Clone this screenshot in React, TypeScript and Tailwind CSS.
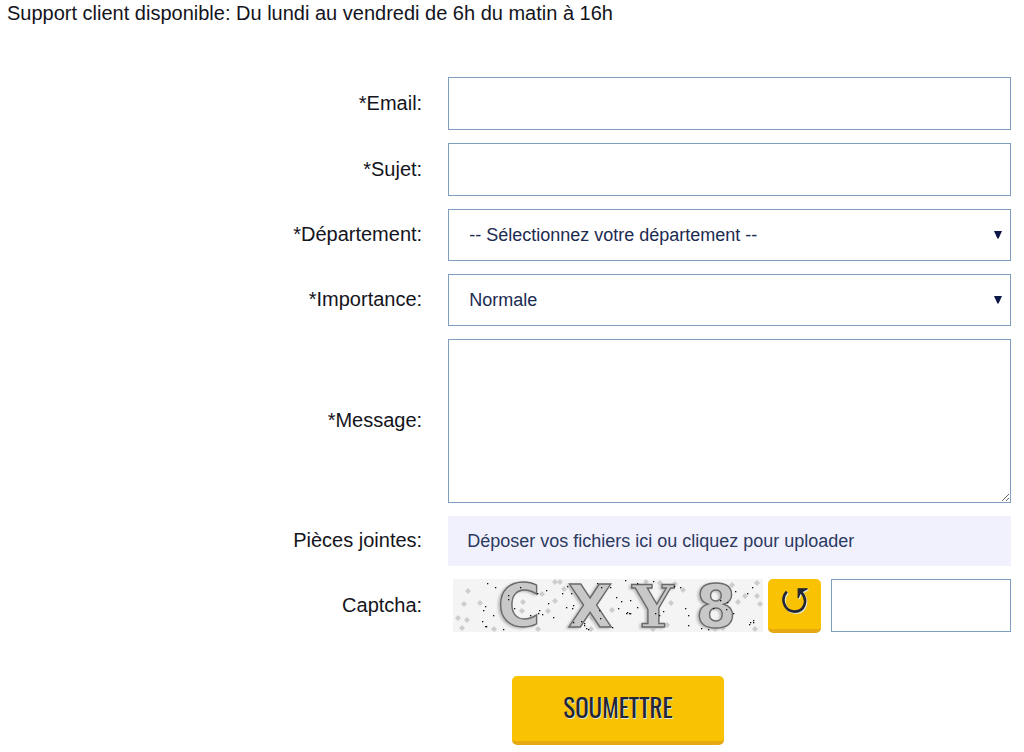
import type { ReactNode } from "react";

const DIAMONDS: [number, number][] = [
  [15, 12], [11, 25], [27, 24], [5, 39], [14, 41], [9, 49], [41, 50], [70, 23], [54, 27], [69, 32],
  [85, 50], [95, 32], [102, 22], [111, 10], [102, 3], [107, 3], [89, 15], [139, 39], [159, 31],
  [138, 50], [193, 3], [207, 4], [222, 5], [230, 11], [218, 24], [279, 6], [304, 4], [292, 17],
  [304, 17], [285, 23], [307, 25], [214, 46], [200, 50], [262, 50], [270, 49], [302, 50],
];

const DOTS: [number, number][] = [
  [34, 4], [42, 8], [55, 16], [61, 29], [55, 20], [32, 27], [30, 31], [29, 42], [32, 47], [33, 47],
  [40, 36], [50, 50], [77, 36], [85, 34], [89, 35], [95, 24], [86, 31], [84, 14], [93, 11], [67, 8],
  [114, 7], [109, 14], [113, 28], [100, 38], [118, 14], [120, 26], [119, 29], [128, 42], [131, 44],
  [131, 46], [133, 49], [135, 50], [120, 43], [144, 4], [146, 31], [147, 39], [148, 8], [157, 8],
  [165, 29], [168, 22], [163, 18], [173, 34], [176, 34], [184, 28], [159, 48], [172, 1], [184, 4],
  [200, 2], [221, 7], [227, 8], [177, 21], [174, 33], [177, 34], [210, 32], [206, 36], [202, 34],
  [232, 29], [235, 36], [235, 46], [248, 49], [255, 50], [267, 21], [280, 34], [299, 8], [282, 12],
  [294, 14], [274, 23], [297, 43], [300, 41], [300, 43], [296, 45], [260, 29], [273, 30],
];

function CaptchaPicture() {
  return (
    <svg
      viewBox="0 0 310 53"
      role="img"
      aria-label="Captcha"
      className="h-[53px] w-[310px] shrink-0 overflow-visible bg-[#f4f4f4]"
    >
      {DIAMONDS.map(([x, y], i) => (
        <path key={i} d={`M${x - 3} ${y}l3 -3l3 3l-3 3z`} fill="#cdcdcd" />
      ))}
      <g
        fontFamily="'DejaVu Sans', sans-serif"
        fontWeight="700"
        fontSize="58"
        textAnchor="middle"
        fill="#c8c8c8"
        stroke="#6a6a6a"
        strokeWidth="1.4"
        className="drop-shadow-[-2px_1px_1px_#bdbdbd]"
      >
        <text x="66" y="47">C</text>
        <text x="137" y="48">X</text>
        <text x="200" y="48" fontFamily="'DejaVu Serif', serif">Y</text>
        <text x="263" y="48">8</text>
      </g>
      {DOTS.map(([x, y], i) => (
        <rect key={i} x={x} y={y} width="1.3" height="1.3" fill="#111" />
      ))}
    </svg>
  );
}

function ReloadIcon() {
  return (
    <svg viewBox="0 0 28 28" aria-hidden="true" className="size-7 drop-shadow-[1px_1px_0_#dfe9df]">
      <path d="M5.8 4.6C-1.2 12.5 3.8 24.6 13.7 24.6C23.5 24.6 27.4 13.5 20.6 5.6" fill="none" stroke="#232633" strokeWidth="2.6" />
      <path d="M17.2 11V1.8H26.5L21.5 4.4L18.8 7z" fill="#232633" stroke="#232633" strokeWidth="1.2" />
    </svg>
  );
}

function Row({ id, label, children }: { id: string; label: string; children: ReactNode }) {
  return (
    <div className="grid grid-cols-[minmax(0,3fr)_minmax(0,4fr)] items-center gap-[26px]">
      <label htmlFor={id} className="pb-0.5 text-right text-[20px] leading-6">
        {label}
      </label>
      {children}
    </div>
  );
}

function Select({ id, text }: { id: string; text: string }) {
  return (
    <div className="relative">
      <select
        id={id}
        className="block h-[52px] w-full appearance-none border border-[#7f9dbf] bg-white px-5 text-[18px] text-[#1c2b50]"
      >
        <option>{text}</option>
      </select>
      <svg viewBox="0 0 8 8" aria-hidden="true" className="pointer-events-none absolute top-[22px] right-[9px] size-2">
        <path d="M0 0H8L4.6 7.5H3.4z" fill="#0b1748" />
      </svg>
    </div>
  );
}

const box = "block border border-[#7f9dbf] bg-white px-5 text-[18px] text-[#1c2b50]";

export default function App() {
  return (
    <main className="bg-white font-['Liberation_Sans',Arial,sans-serif] text-[#14141c]">
      <p className="pt-px pl-[7px] text-[20px] leading-6">
        Support client disponible: Du lundi au vendredi de 6h du matin à 16h
      </p>
      <form className="pt-[52px]">
        <div className="flex flex-col gap-[13px] pr-[13px]">
          <Row id="email" label="*Email:">
            <input id="email" type="email" className={`${box} h-[53px] w-full`} />
          </Row>
          <Row id="sujet" label="*Sujet:">
            <input id="sujet" type="text" className={`${box} h-[53px] w-full`} />
          </Row>
          <Row id="departement" label="*Département:">
            <Select id="departement" text="-- Sélectionnez votre département --" />
          </Row>
          <Row id="importance" label="*Importance:">
            <Select id="importance" text="Normale" />
          </Row>
          <Row id="message" label="*Message:">
            <textarea id="message" className={`${box} h-[164px] w-full resize`} />
          </Row>
          <Row id="fichiers" label="Pièces jointes:">
            <label
              htmlFor="fichiers"
              className="relative flex h-[50px] cursor-pointer items-center bg-[#f1f1fe] px-[19px] text-[18px] text-[#2c3a5e]"
            >
              Déposer vos fichiers ici ou cliquez pour uploader
              <input id="fichiers" type="file" multiple className="sr-only" />
            </label>
          </Row>
          <Row id="captcha" label="Captcha:">
            <div className="flex items-start pl-[5px]">
              <CaptchaPicture />
              <button
                type="button"
                aria-label="Recharger"
                className="ml-[5px] flex h-[54px] w-[53px] shrink-0 items-start justify-center rounded-[5px] border-b-4 border-[#e6a914] bg-[#f9c203] pt-2"
              >
                <ReloadIcon />
              </button>
              <input id="captcha" type="text" className={`${box} ml-2.5 h-[53px] min-w-0 flex-1`} />
            </div>
          </Row>
        </div>
        <button
          type="submit"
          className="mt-[43px] ml-[50%] block h-[69px] w-[212px] rounded-[5px] border-b-4 border-[#e6a914] bg-[#f9c203] pb-1 font-['Oswald','Roboto_Condensed','Liberation_Sans_Narrow',sans-serif] text-[25px] text-[#232633] [text-shadow:1px_1px_0_#dfe9df]"
        >
          SOUMETTRE
        </button>
      </form>
    </main>
  );
}
